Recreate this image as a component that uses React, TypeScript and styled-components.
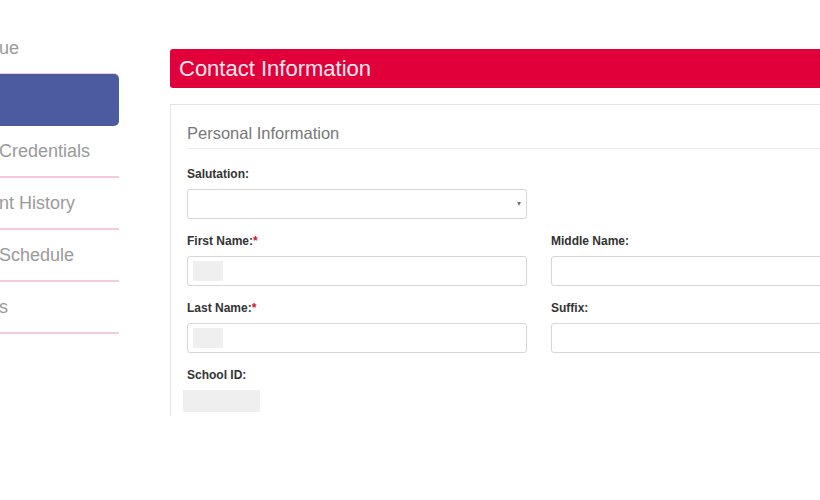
import React from 'react';
import styled, { createGlobalStyle } from 'styled-components';

const GlobalStyle = createGlobalStyle`
    html, body {
        margin: 0;
        padding: 0;
        background: #ffffff;
        overflow: hidden;
    }
    body {
        font-family: "Liberation Sans", Arial, sans-serif;
    }
`;

const Page = styled.div`
    display: flex;
    align-items: flex-start;
    width: 820px;
    height: 500px;
    overflow: hidden;
`;

const Sidebar = styled.nav`
    flex: 0 0 120px;
    width: 120px;
    padding-top: 22px;
    display: flex;
    flex-direction: column;
`;

const NavItem = styled.div<{ $active?: boolean; $plain?: boolean }>`
    height: 52px;
    box-sizing: border-box;
    margin-left: -10px;
    width: 129px;
    padding-left: 9px;
    padding-top: 1px;
    display: flex;
    align-items: center;
    font-size: 18px;
    white-space: nowrap;
    overflow: hidden;
    color: #9a9a9a;
    border-bottom: ${(p) => (p.$plain || p.$active ? 'none' : '2px solid #f5cade')};
    background: ${(p) => (p.$active ? '#4b5b9f' : 'transparent')};
    border-radius: ${(p) => (p.$active ? '5px' : '0')};
    box-shadow: ${(p) => (p.$active ? '0 -1px 0 #f0c8d8' : 'none')};
`;

const Main = styled.main`
    flex: 0 0 720px;
    margin-left: 50px;
    padding-top: 49px;
`;

const Header = styled.h1`
    margin: 0;
    height: 39px;
    box-sizing: border-box;
    background: #e2003a;
    border-radius: 3px;
    color: #fde8ee;
    font-size: 22px;
    font-weight: normal;
    line-height: 39px;
    padding-left: 9px;
`;

const Panel = styled.section`
    margin-top: 16px;
    border: 1px solid #e4e4e4;
    border-bottom: 0;
    padding: 18px 16px 4px 16px;
`;

const SectionTitle = styled.h2`
    margin: 0 0 18px;
    font-size: 16.5px;
    font-weight: normal;
    line-height: 20px;
    color: #777777;
    padding-bottom: 5px;
    border-bottom: 1px solid #ececec;
`;

const Grid = styled.div`
    display: grid;
    grid-template-columns: 340px 340px;
    column-gap: 24px;
`;

const Field = styled.div<{ $last?: boolean }>`
    display: flex;
    flex-direction: column;
    margin-bottom: ${(p) => (p.$last ? '0' : '15px')};
`;

const Label = styled.label`
    font-size: 12px;
    font-weight: bold;
    line-height: 15px;
    color: #333333;
    margin-bottom: 7px;
`;

const Required = styled.span`
    color: #d0103a;
`;

const Input = styled.div`
    position: relative;
    height: 30px;
    box-sizing: border-box;
    border: 1px solid #d6d6d6;
    border-radius: 3px;
    background: #ffffff;
    padding: 5px;
    display: flex;
    align-items: center;
`;

const Caret = styled.span`
    position: absolute;
    right: 5px;
    top: 12px;
    width: 0;
    height: 0;
    border-left: 2.5px solid transparent;
    border-right: 2.5px solid transparent;
    border-top: 4px solid #777777;
`;

const Redacted = styled.span<{ $w: number; $h: number }>`
    display: block;
    width: ${(p) => p.$w}px;
    height: ${(p) => p.$h}px;
    background: #efefef;
`;

const StaticValue = styled.div`
    margin-left: -4px;
`;

const navItems = ['Credentials', 'nt History', 'Schedule', 's'];

export default function App() {
    return (
        <>
            <GlobalStyle />
            <Page>
                <Sidebar>
                    <NavItem $plain>ue</NavItem>
                    <NavItem $active />
                    {navItems.map((item) => (
                        <NavItem key={item}>{item}</NavItem>
                    ))}
                </Sidebar>
                <Main>
                    <Header>Contact Information</Header>
                    <Panel>
                        <SectionTitle>Personal Information</SectionTitle>
                        <Grid>
                            <Field>
                                <Label>Salutation:</Label>
                                <Input>
                                    <Caret />
                                </Input>
                            </Field>
                            <div />
                            <Field>
                                <Label>
                                    First Name:<Required>*</Required>
                                </Label>
                                <Input>
                                    <Redacted $w={30} $h={20} />
                                </Input>
                            </Field>
                            <Field>
                                <Label>Middle Name:</Label>
                                <Input />
                            </Field>
                            <Field>
                                <Label>
                                    Last Name:<Required>*</Required>
                                </Label>
                                <Input>
                                    <Redacted $w={30} $h={20} />
                                </Input>
                            </Field>
                            <Field>
                                <Label>Suffix:</Label>
                                <Input />
                            </Field>
                            <Field $last>
                                <Label>School ID:</Label>
                                <StaticValue>
                                    <Redacted $w={77} $h={22} />
                                </StaticValue>
                            </Field>
                        </Grid>
                    </Panel>
                </Main>
            </Page>
        </>
    );
}
